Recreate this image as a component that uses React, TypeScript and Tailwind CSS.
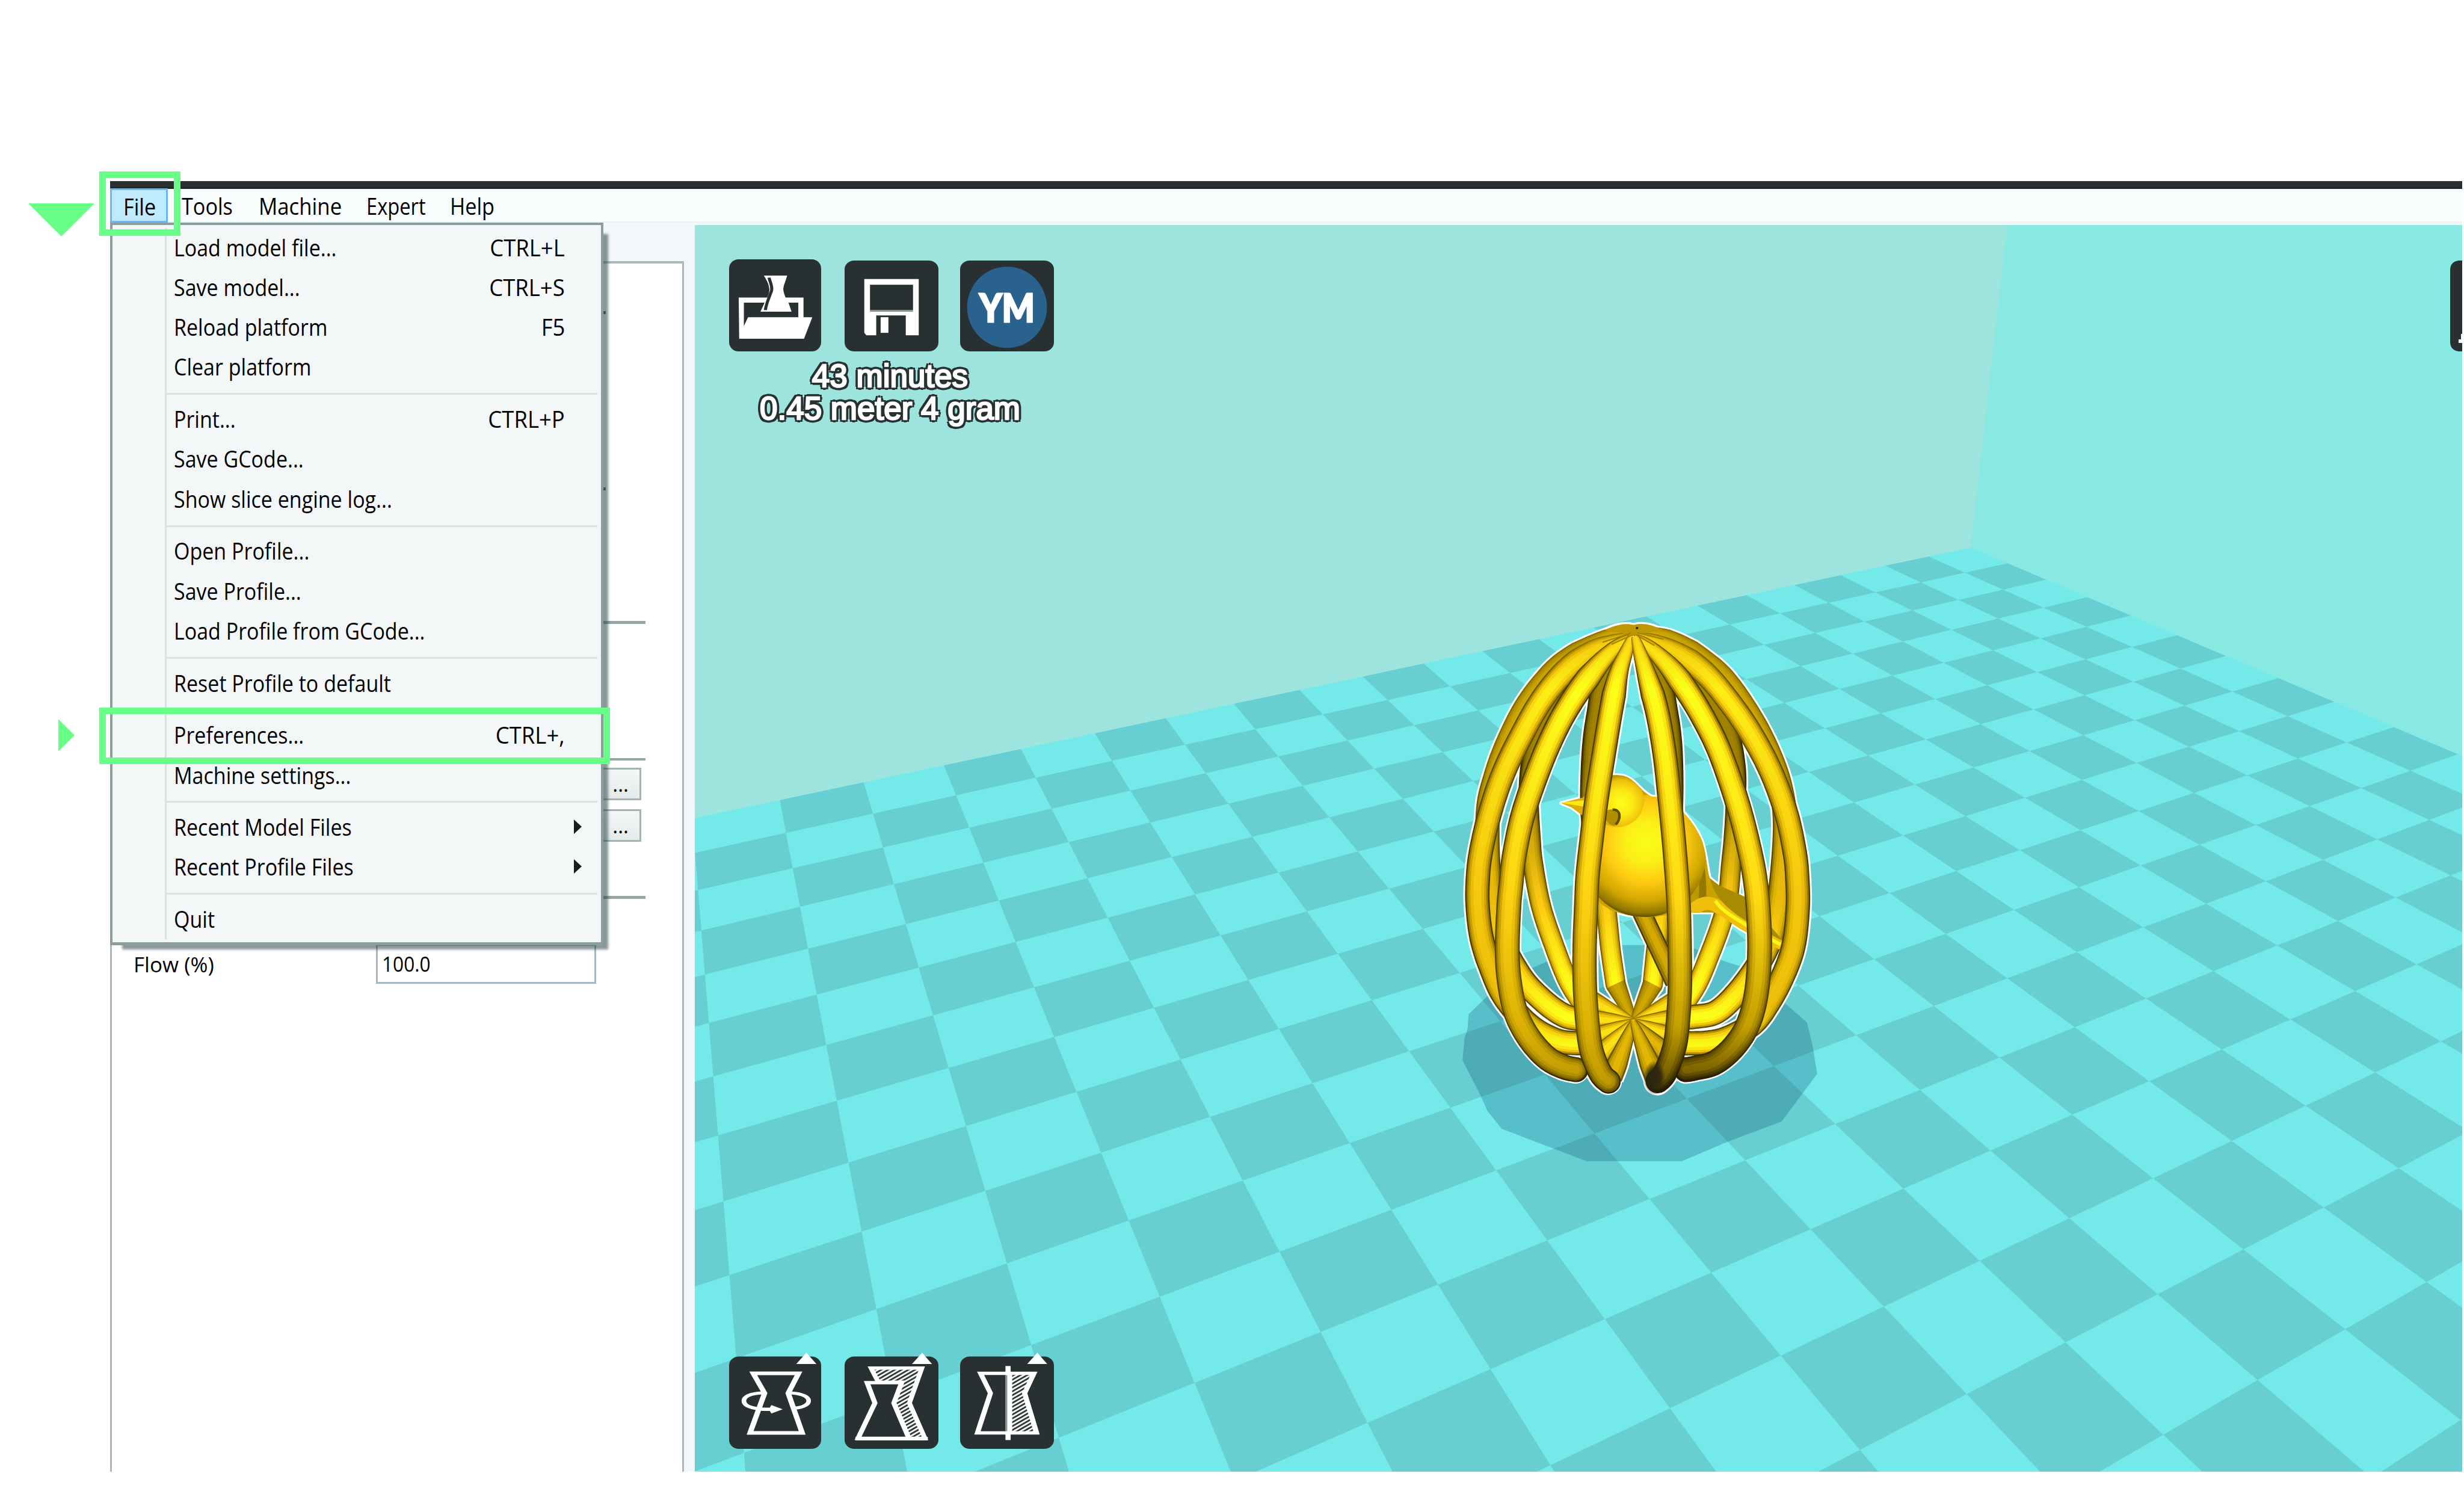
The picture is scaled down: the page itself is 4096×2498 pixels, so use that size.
import React from "react";

type Entry = { label: string; keys?: string; sub?: boolean } | null;

const FILE_MENU: Entry[] = [
  { label: "Load model file...", keys: "CTRL+L" },
  { label: "Save model...", keys: "CTRL+S" },
  { label: "Reload platform", keys: "F5" },
  { label: "Clear platform" },
  null,
  { label: "Print...", keys: "CTRL+P" },
  { label: "Save GCode..." },
  { label: "Show slice engine log..." },
  null,
  { label: "Open Profile..." },
  { label: "Save Profile..." },
  { label: "Load Profile from GCode..." },
  null,
  { label: "Reset Profile to default" },
  null,
  { label: "Preferences...", keys: "CTRL+," },
  { label: "Machine settings..." },
  null,
  { label: "Recent Model Files", sub: true },
  { label: "Recent Profile Files", sub: true },
  null,
  { label: "Quit" },
];

/* ---------- build platform ---------- */

// Perspective projection of platform grid vertex (u, v) into scene units.
function project(u: number, v: number): [number, number] {
  const w = 1 - 0.01524 * u - 0.02655 * v;
  return [
    (3874 - 140.41 * u - 32.55 * v) / w,
    (1076.1 + 0.845 * u + 1.24 * v) / w,
  ];
}

function quad(u0: number, v0: number, u1: number, v1: number) {
  return (
    "M" +
    [project(u0, v0), project(u1, v0), project(u1, v1), project(u0, v1)]
      .map(([x, y]) => x.toFixed(1) + " " + y.toFixed(1))
      .join("L") +
    "Z"
  );
}

const DARK_TILES = (() => {
  let d = "";
  for (let u = 0; u < 24; u++)
    for (let v = 0; v < 20; v++) if ((u + v) % 2 === 1) d += quad(u, v, u + 1, v + 1);
  return d;
})();

/* ---------- egg cage ---------- */

type Pt = [number, number];

// Points along a Catmull-Rom spline.
function sample(p: Pt[]): Pt[] {
  const out: Pt[] = [];
  const n = 10;
  for (let i = 0; i < p.length - 1; i++) {
    const a = p[Math.max(0, i - 1)], b = p[i], c = p[i + 1], e = p[Math.min(p.length - 1, i + 2)];
    for (let k = 0; k < n; k++) {
      const t = k / n, t2 = t * t, t3 = t2 * t;
      const f = (q: 0 | 1) =>
        0.5 * (2 * b[q] + (c[q] - a[q]) * t + (2 * a[q] - 5 * b[q] + 4 * c[q] - e[q]) * t2 + (3 * b[q] - a[q] - 3 * c[q] + e[q]) * t3);
      out.push([f(0), f(1)]);
    }
  }
  out.push(p[p.length - 1]);
  return out;
}

// Outline of a bar that starts narrow at its first point and widens over `reach`.
function ribbon(pts: Pt[], half: number, pad = 0, reach = 120, start = 0.3, cap = true) {
  const s = sample(pts);
  const left: string[] = [], right: string[] = [];
  let dist = 0;
  for (let i = 0; i < s.length; i++) {
    const a = s[Math.max(0, i - 1)], b = s[Math.min(s.length - 1, i + 1)];
    if (i) dist += Math.hypot(s[i][0] - s[i - 1][0], s[i][1] - s[i - 1][1]);
    const dx = b[0] - a[0], dy = b[1] - a[1], l = Math.hypot(dx, dy) || 1;
    const h = half * Math.min(1, start + (1 - start) * Math.pow(dist / reach, 0.75)) + pad;
    left.push((s[i][0] - (dy / l) * h).toFixed(1) + " " + (s[i][1] + (dx / l) * h).toFixed(1));
    right.unshift((s[i][0] + (dy / l) * h).toFixed(1) + " " + (s[i][1] - (dx / l) * h).toFixed(1));
  }
  const r = (half + pad).toFixed(1);
  return `M${left.join("L")}${cap ? `A${r} ${r} 0 0 0 ` : "L"}${right.join("L")}Z`;
}

const BACK: Pt[][] = [
  [[3208,1254],[3155,1330],[3139,1400],[3129,1480],[3127,1600],[3143,1700],[3157,1783],[3166,1866],[3176,1934]],
  [[3214,1254],[3262,1330],[3279,1400],[3288,1480],[3288,1600],[3275,1720],[3264,1800],[3256,1866],[3249,1934]],
  [[3205,1254],[3115,1330],[3045,1410],[3014,1480],[3005,1560],[3009,1650],[3014,1700],[3030,1783],[3058,1866],[3083,1928],[3112,1975]],
  [[3215,1254],[3325,1330],[3390,1420],[3411,1500],[3412,1580],[3408,1650],[3403,1700],[3397,1762],[3383,1816],[3360,1878],[3337,1932],[3310,1975]],
];
const L4: Pt[] = [[3211,1241],[3175,1247],[3141,1262],[3077,1301],[3040,1336],[3000,1389],[2965,1458],[2940,1526],[2925,1597],[2927,1720],[2945,1830],[2987,1915],[3032,1965],[3076,1996],[3110,2002]];
const R4: Pt[] = [[3211,1241],[3256,1248],[3290,1261],[3345,1297],[3391,1338],[3441,1410],[3477,1480],[3500,1547],[3509,1620],[3502,1730],[3488,1820],[3465,1880],[3420,1945],[3375,1988],[3331,1998],[3310,1999]];
const L3: Pt[] = [[3208,1250],[3170,1261],[3130,1278],[3078,1318],[3031,1375],[2990,1447],[2955,1520],[2929,1597],[2911,1675],[2905,1730],[2905,1783],[2913,1845],[2931,1902],[2958,1960],[3007,2015],[3062,2045],[3110,2050]];
const R3: Pt[] = [[3214,1250],[3254,1261],[3302,1285],[3352,1323],[3397,1376],[3440,1438],[3481,1515],[3511,1597],[3528,1675],[3533,1725],[3534,1783],[3526,1857],[3506,1915],[3477,1970],[3445,2012],[3395,2040],[3354,2049],[3310,2050]];
const L2: Pt[] = [[3209,1252],[3180,1269],[3150,1298],[3115,1341],[3087,1382],[3060,1430],[3029,1500],[2995,1597],[2977,1680],[2970,1740],[2966,1783],[2963,1866],[2967,1928],[2980,1990],[3006,2040],[3040,2078],[3073,2096],[3098,2102]];
const R2: Pt[] = [[3213,1252],[3243,1272],[3282,1311],[3318,1360],[3348,1410],[3376,1466],[3400,1530],[3421,1597],[3438,1665],[3449,1720],[3456,1783],[3459,1866],[3453,1949],[3437,2011],[3409,2056],[3371,2088],[3331,2099],[3314,2102]];
const F1: Pt[] = [[3208,1250],[3197,1280],[3181,1325],[3167,1395],[3153,1479],[3139,1567],[3129,1647],[3121,1720],[3118,1783],[3115,1866],[3116,1949],[3123,2032],[3131,2073],[3147,2110],[3162,2125]];
const F2: Pt[] = [[3214,1250],[3223,1280],[3237,1325],[3257,1395],[3272,1479],[3282,1567],[3290,1647],[3296,1720],[3300,1783],[3302,1866],[3302,1949],[3296,2032],[3287,2073],[3272,2110],[3258,2125]];

const HUB: Pt = [3211, 2008];
const SPOKES: Pt[] = [
  [3176,1934],[3249,1934],[3130,1968],[3293,1968],[3100,2001],[3324,1999],[3100,2050],[3322,2050],[3125,2092],[3297,2092],[3168,2118],[3254,2118],
];

const TONES: Record<string, string[][]> = {
  // near bars: bright at the shoulder, darkening underneath
  f: [
    ["#7d6500", "#4a3b00", "#5a4700", "#4a3a00", "#1c1500"],
    ["#c39c00", "#a68600", "#a88700", "#7a6200", "#241b00"],
    ["#e6ba08", "#e9bf08", "#d3a902", "#9a7d00", "#302500"],
    ["#f4cc10", "#fbea16", "#f4ca10", "#b18f00", "#453600"],
    ["#f7d410", "#fbff18", "#ffdb12", "#c3a000", "#5a4700"],
  ],
  // left near bars keep some light at the bottom
  m: [
    ["#7d6500", "#4a3b00", "#5a4700", "#5a4700", "#2a2100"],
    ["#c39c00", "#a68600", "#a88700", "#957800", "#6b5600"],
    ["#e6ba08", "#e9bf08", "#d0a702", "#b89400", "#8a6f00"],
    ["#f4cc10", "#fbea16", "#f1c60e", "#cfa702", "#a88800"],
    ["#f7d410", "#fbff18", "#fdd412", "#dcb104", "#b99600"],
  ],
  // outer bars, more orange
  s: [
    ["#8f7400", "#6b5600", "#4a3b00", "#574500", "#5f4c00"],
    ["#b89400", "#b08e00", "#997a00", "#a88700", "#b89400"],
    ["#d6ac04", "#e3b806", "#c99f00", "#d0a700", "#f1c60e"],
    ["#e8bb0a", "#fbd812", "#e8ba08", "#e8ba06", "#fbe414"],
    ["#f1c60e", "#fdee14", "#f4c60e", "#eebf0a", "#fbf916"],
  ],
  // rear outer bars
  o: [
    ["#8a7000", "#7d6500", "#4a3b00", "#574500", "#5f4c00"],
    ["#a88800", "#a88800", "#957800", "#b08e00", "#c9a200"],
    ["#b99600", "#bc9900", "#c39c00", "#dcb204", "#f1c60e"],
    ["#c9a200", "#cda500", "#e0b406", "#f7ca10", "#fbee14"],
    ["#cfa700", "#d6ac04", "#ecbc0a", "#ffdb12", "#fbff18"],
  ],
  // far bars, dark near the top and lit from inside below
  b: [
    ["#3a2e00", "#2e2500", "#6b5600", "#7d6500", "#7d6500"],
    ["#6b5600", "#544400", "#b08e00", "#cda500", "#cda500"],
    ["#8a7000", "#7d6500", "#d6ac04", "#f1c60e", "#f1c60e"],
    ["#9a7d00", "#947800", "#eabb0a", "#fdf016", "#fdf016"],
    ["#a38500", "#a08200", "#ffca12", "#fbff18", "#fbff18"],
  ],
};
const TONE_STOPS: Record<string, number[]> = {
  f: [0.02, 0.14, 0.58, 0.86, 1],
  m: [0.02, 0.14, 0.58, 0.86, 1],
  s: [0.02, 0.14, 0.6, 0.82, 0.9],
  o: [0, 0.3, 0.6, 0.74, 0.84],
  b: [0, 0.3, 0.6, 0.78, 1],
};
const LAYERS = [1, 0.88, 0.74, 0.56, 0.32];

function Tube({ pts, w, tone }: { pts: Pt[]; w: number; tone: string }) {
  return (
    <g>
      {LAYERS.map((k, i) => (
        <path key={i} d={ribbon(pts, (w / 2) * k)} fill={`url(#${tone}${i})`} />
      ))}
    </g>
  );
}

const BIRD =
  "M3112 1567L3135 1540C3150 1524 3170 1521 3190 1524C3215 1530 3225 1555 3247 1565L3268 1567C3300 1580 3330 1615 3345 1650C3356 1680 3356 1715 3362 1726L3380 1740L3430 1762L3492 1833L3506 1849L3498 1866L3435 1833C3400 1815 3385 1795 3365 1793L3320 1793L3275 1798C3240 1806 3205 1802 3170 1790C3130 1770 3108 1740 3112 1690L3110 1602L3090 1587L3069 1578Z";

function Scene() {
  const near = [L4, R4, L3, R3, L2, R2, F1, F2];
  return (
    <svg
      className="absolute inset-0 h-full w-full"
      viewBox="1366 442 3474 2450"
      preserveAspectRatio="none"
    >
      <defs>
        {Object.keys(TONES).map((t) =>
          TONES[t].map((stops, i) => (
            <linearGradient key={t + i} id={t + i} gradientUnits="userSpaceOnUse" x1="0" y1="1225" x2="0" y2="2145">
              {stops.map((c, j) => (
                <stop key={j} offset={TONE_STOPS[t][j]} stopColor={c} />
              ))}
            </linearGradient>
          ))
        )}
        <radialGradient id="body" gradientUnits="userSpaceOnUse" cx="3236" cy="1655" r="152">
          <stop offset="0" stopColor="#fbff18" />
          <stop offset="0.28" stopColor="#fbee16" />
          <stop offset="0.52" stopColor="#ffc912" />
          <stop offset="0.76" stopColor="#cfa600" />
          <stop offset="0.92" stopColor="#8f7400" />
          <stop offset="1" stopColor="#3a2e00" />
        </radialGradient>
        <radialGradient id="head" gradientUnits="userSpaceOnUse" cx="3186" cy="1578" r="56">
          <stop offset="0" stopColor="#fbff18" />
          <stop offset="0.45" stopColor="#fbe814" />
          <stop offset="0.8" stopColor="#efc00c" />
          <stop offset="1" stopColor="#b08e00" />
        </radialGradient>
        <radialGradient id="tip">
          <stop offset="0" stopColor="#2a2412" />
          <stop offset="0.6" stopColor="#2a2412" stopOpacity="0.8" />
          <stop offset="1" stopColor="#2a2412" stopOpacity="0" />
        </radialGradient>
        <clipPath id="birdClip"><path d={BIRD} /></clipPath>
      </defs>

      <rect x="1366" y="442" width="3474" height="2450" fill="#9de4df" />
      <path d="M3946 442L4840 442V1487L3874 1076Z" fill="#88e9e3" />
      <path d={quad(0, 0, 24, 20)} fill="#73e9ea" />
      <path d={DARK_TILES} fill="#67cfd2" />
      <path
        d="M2922 1959L2887 1993L2885 2021L2879 2040L2875 2083L2911 2154L2924 2183L2952 2218L3119 2282H3306L3397 2243L3502 2204L3572 2110L3563 2054L3552 2009L3512 1974L3429 1901L3388 1888L3331 1864L3233 1857H3124L3044 1888L3010 1903Z"
        fill="#0e5274"
        fillOpacity="0.28"
      />

      {/* white silhouette behind the model */}
      <g fill="#fff">
        {BACK.map((p, i) => <path key={i} d={ribbon(p, 20, 3.5)} />)}
        {near.map((p, i) => <path key={i} d={ribbon(p, 24, 3.5)} />)}
        {SPOKES.map((p, i) => <path key={i} d={ribbon([HUB, p], 21, 3.5, 90, 0.3, false)} />)}
        <path d="M3226 1790L3292 1930" stroke="#fff" strokeWidth="45" />
        <path d="M3150 1236C3175 1221 3200 1221 3211 1224C3225 1220 3250 1221 3275 1238Z" />
        <path d={BIRD} stroke="#fff" strokeWidth="7" strokeLinejoin="round" />
      </g>

      {BACK.map((p, i) => <Tube key={i} pts={p} w={40} tone="b" />)}

      {/* spokes meeting at the base */}
      {SPOKES.map((p, i) => {
        const c = i < 2
          ? ["#7d6500", "#a68600", "#bd9800", "#cfa700"]
          : i === 10 || i === 11 || i === 9
          ? ["#6b5600", "#b08e00", "#cfa700", "#e3b606"]
          : ["#8a7000", "#cfa700", "#f1c60e", "#fbe014"];
        return (
          <g key={i}>
            {[21, 17.5, 13, 7].map((h, j) => (
              <path key={j} d={ribbon([HUB, p], h, 0, 90, 0.3, false)} fill={c[j]} />
            ))}
          </g>
        );
      })}

      <Tube pts={L4} w={48} tone="o" />
      <Tube pts={R4} w={48} tone="o" />

      {/* perch */}
      <path d="M3226 1790L3292 1930" stroke="#4a3b00" strokeWidth="38" />
      <path d="M3226 1790L3292 1930" stroke="#957800" strokeWidth="32" />
      <path d="M3227 1790L3293 1930" stroke="#bd9800" strokeWidth="23" />
      <path d="M3227 1790L3293 1930" stroke="#d3a902" strokeWidth="12" />

      {/* bird */}
      <g clipPath="url(#birdClip)">
        <path d={BIRD} fill="#c9a200" />
        <path d="M3320 1660L3372 1800L3300 1810Z" fill="#bd9800" />
        <path d="M3340 1680C3350 1740 3352 1780 3330 1795" stroke="#957800" strokeWidth="14" fill="none" />
        <path d="M3320 1795C3345 1770 3365 1765 3400 1800L3500 1862" stroke="#efbf0c" strokeWidth="26" fill="none" />
        <path d="M3362 1726C3368 1755 3385 1780 3436 1812L3506 1850L3430 1762L3380 1740Z" fill="#a88b00" />
        <path d="M3372 1770C3385 1790 3405 1800 3436 1820L3500 1856" stroke="#fbf516" strokeWidth="7" fill="none" />
        <ellipse cx="3232" cy="1682" rx="121" ry="120" fill="url(#body)" />
        <ellipse cx="3180" cy="1573" rx="52" ry="52" fill="url(#head)" />
        <path d="M3060 1577L3120 1560V1606Z" fill="#d9ae06" />
        <path d="M3066 1577L3120 1572V1586Z" fill="#fbe814" />
        <path d="M3160 1592C3180 1585 3188 1605 3176 1622C3166 1624 3158 1616 3156 1608Z" fill="#b08e00" />
        <path d="M3170 1591C3188 1590 3186 1612 3176 1620" stroke="#5f4c00" strokeWidth="5" fill="none" />
      </g>

      <Tube pts={L3} w={48} tone="s" />
      <Tube pts={R3} w={48} tone="s" />
      <Tube pts={L2} w={49} tone="m" />
      <Tube pts={R2} w={49} tone="f" />
      <Tube pts={F1} w={48} tone="m" />
      <Tube pts={F2} w={48} tone="f" />
      <ellipse cx="3252" cy="2118" rx="22" ry="34" fill="url(#tip)" />

      {/* crown where the bars meet */}
      <path d="M3155 1238C3180 1225 3200 1225 3211 1228C3225 1224 3245 1225 3268 1238L3211 1248Z" fill="#bd9800" />
      <path d="M3150 1262L3206 1244M3168 1266L3208 1248M3270 1256L3218 1243M3252 1268L3216 1247" stroke="#a08200" strokeWidth="2.5" />
      <circle cx="3218" cy="1234" r="2.5" fill="#2e2500" />
    </svg>
  );
}

/* ---------- tool buttons ---------- */

function ToolButton({ box, className, children }: { box: string; className: string; children: React.ReactNode }) {
  return (
    <svg viewBox={box} preserveAspectRatio="none" className={"block shrink-0 overflow-visible " + className}>
      {children}
    </svg>
  );
}

function LoadIcon() {
  return (
    <ToolButton box="143 207 355 542" className="h-[153px] w-[153px]">
      <rect x="143" y="207" width="355" height="542" rx="36" ry="55" fill="#283031" />
      <path d="M180 432H430V548H464L432 675H182ZM200 462V600L216 548H410V462Z" fill="#fff" fillRule="evenodd" />
      <path d="M277 303H367C360 340 352 365 352 385C354 410 362 440 372 462L384 515H264L280 462C292 430 300 400 298 380C296 350 286 325 277 303Z" fill="#fff" />
      <path d="M297 315C302 345 310 365 307 390C300 425 286 465 283 506" stroke="#283031" strokeWidth="12" fill="none" />
    </ToolButton>
  );
}

function SaveIcon() {
  return (
    <ToolButton box="588 215 362 534" className="h-[151px] w-[156px]">
      <rect x="588" y="215" width="362" height="534" rx="38" ry="52" fill="#283031" />
      <path d="M664 324H874V654H824V538H710V654H672L664 640ZM686 357V507H852V357Z" fill="#fff" fillRule="evenodd" />
      <rect x="686" y="507" width="166" height="9" fill="#869393" />
      <rect x="727" y="548" width="30" height="92" fill="#fff" />
    </ToolButton>
  );
}

function YmIcon() {
  return (
    <ToolButton box="1033 215 362 534" className="h-[151px] w-[156px]">
      <rect x="1033" y="215" width="362" height="534" rx="38" ry="52" fill="#283031" />
      <ellipse cx="1214" cy="490" rx="154" ry="239" fill="#2a628e" />
      <g transform="translate(1108 576) scale(1 1.531)">
        <text x="0" y="0" textLength="212" lengthAdjust="spacingAndGlyphs" fontFamily="Lato" fontWeight="900" fontSize="148" fill="#fff" stroke="#fff" strokeWidth="7">YM</text>
      </g>
    </ToolButton>
  );
}

const HATCH = (
  <pattern id="hatch" width="26" height="26" patternUnits="userSpaceOnUse" patternTransform="skewX(-8)">
    <rect width="26" height="26" fill="#fff" />
    <path d="M-4 30L30 -4M-17 17L17 -17M9 43L43 9" stroke="#283031" strokeWidth="9" />
  </pattern>
);

function RotateIcon() {
  return (
    <ToolButton box="143 192 355 546" className="h-[154px] w-[153px]">
      <rect x="143" y="194" width="355" height="544" rx="38" ry="52" fill="#283031" />
      <path d="M236 293H411L371 410L425 644H224L280 410Z" fill="none" stroke="#fff" strokeWidth="21" />
      <path d="M272 408C225 410 200 430 200 455C200 480 222 503 290 506M380 408C430 412 450 435 450 455C450 475 430 495 396 498" fill="none" stroke="#fff" strokeWidth="18" />
      <path d="M268 495H300L306 480L350 505L306 530L300 515H268Z" fill="#fff" />
      <path d="M441 172L480 238H402Z" fill="#fff" />
    </ToolButton>
  );
}

function ScaleIcon() {
  return (
    <ToolButton box="588 192 362 546" className="h-[154px] w-[156px]">
      <defs>{HATCH}</defs>
      <rect x="588" y="194" width="362" height="544" rx="38" ry="52" fill="#283031" />
      <path d="M690 262H886L838 468L898 676H836L778 468L808 345H718Z" fill="url(#hatch)" stroke="#fff" strokeWidth="19" />
      <path d="M675 348H808L778 468L836 676H640L705 468Z" fill="#283031" stroke="#fff" strokeWidth="20" />
      <rect x="630" y="668" width="279" height="20" fill="#fff" />
      <path d="M887 172L925 238H848Z" fill="#fff" />
    </ToolButton>
  );
}

function MirrorIcon() {
  return (
    <ToolButton box="1033 192 362 546" className="h-[154px] w-[156px]">
      <rect x="1033" y="194" width="362" height="544" rx="38" ry="52" fill="#283031" />
      <path d="M1225 293H1318L1282 410L1328 644H1225Z" fill="url(#hatch)" stroke="#fff" strokeWidth="18" />
      <path d="M1112 293H1318L1282 410L1328 644H1100L1150 410Z" fill="none" stroke="#fff" strokeWidth="20" />
      <rect x="1208" y="250" width="20" height="436" fill="#fff" />
      <rect x="1207" y="304" width="8" height="330" fill="#869393" />
      <path d="M1331 172L1369 238H1292Z" fill="#fff" />
    </ToolButton>
  );
}

/* ---------- chrome ---------- */

const uiText = "whitespace-nowrap font-['Open_Sans',sans-serif] text-[38px] leading-none text-black";

function FileDropdown() {
  return (
    <div className="absolute left-0 top-[69px] z-10 flex h-[1201px] w-[820px] flex-col border-x-[4px] border-b-[5px] border-t-[4px] border-[#8a9e9e] bg-[#f3f7f8] py-[4px] shadow-[14px_13px_4px_-6px_rgba(40,66,66,0.55)]">
      <div className="absolute left-[87px] top-[5px] h-[1182px] w-[3px] bg-[#d9e1e1]" />
      {FILE_MENU.map((e, i) =>
        e === null ? (
          <div key={i} className="ml-[89px] mr-[6px] flex h-[20.7px] items-center">
            <div className="relative top-[2px] h-[3px] w-full bg-[#d9e1e1]" />
          </div>
        ) : (
          <div key={i} className="flex h-[66.15px] items-center justify-between pl-[102px] pr-[60px]">
            <span className={uiText + " origin-left scale-x-[0.895]"}>{e.label}</span>
            {e.keys && <span className={uiText + " origin-right scale-x-[0.96]"}>{e.keys}</span>}
            {e.sub && (
              <svg className="-mr-[28px] h-[24px] w-[13px]" viewBox="0 0 13 24">
                <path d="M0 0L13 12L0 24Z" fill="#141f1f" />
              </svg>
            )}
          </div>
        )
      )}
    </div>
  );
}

function MenuBar() {
  const item = uiText + " inline-block origin-left scale-x-[0.9] pt-[3px]";
  return (
    <nav className="relative flex h-[56px] items-center border-b-[2px] border-[#edf1f1] bg-[#f8fcfd]">
      <div className="flex h-[57px] w-[96px] items-center border-[3px] border-[#68b6ff] bg-[#c0ebff] pl-[19px]">
        <span className={item}>File</span>
      </div>
      <div className="w-[143px] pl-[23px]"><span className={item}>Tools</span></div>
      <div className="w-[180px] pl-[8px]"><span className={uiText + " inline-block origin-left scale-x-[0.915] pt-[3px]"}>Machine</span></div>
      <div className="w-[138px] pl-[7px]"><span className={uiText + " inline-block origin-left scale-x-[0.86] pt-[3px]"}>Expert</span></div>
      <div className="w-[100px] pl-[8px]"><span className={item}>Help</span></div>
    </nav>
  );
}

function EllipsisButton({ className }: { className: string }) {
  return (
    <div className={"mr-[68px] flex h-[54px] w-[90px] items-center justify-end border-[3px] border-[#a4b4b4] bg-linear-to-b from-[#f4f7f7] to-[#e4eaea] pr-[18px] " + className}>
      <span className="font-['Open_Sans',sans-serif] text-[34px] leading-none text-black">...</span>
    </div>
  );
}

function SettingsPanel() {
  return (
    <aside className="w-[972px] shrink-0 bg-[#f3f7f9] pt-[64px]">
      <div className="flex h-full w-[954px] flex-col items-end border-x-[3px] border-t-[4px] border-[#a9b8b8] bg-white">
        <div className="mr-[127px] mt-[79px] h-[5px] w-[20px] bg-[#5c6d6d]" />
        <div className="mr-[127px] mt-[288px] h-[5px] w-[20px] bg-[#5c6d6d]" />
        <div className="mr-[61px] mt-[217px] h-[5px] w-[820px] bg-[#94a6a6]" />
        <div className="mr-[61px] mt-[223px] h-[4px] w-[820px] bg-[#94a6a6]" />
        <EllipsisButton className="mt-[12px]" />
        <EllipsisButton className="mt-[15px]" />
        <div className="mr-[61px] mt-[90px] h-[5px] w-[820px] bg-[#94a6a6]" />
        <div className="mr-[143px] mt-[75px] flex items-center">
          <span className="mr-[270px] inline-block w-[133px] whitespace-nowrap font-['Open_Sans',sans-serif] text-[35px] leading-none text-black">
            Flow (%)
          </span>
          <div className="flex h-[66px] w-[366px] shrink-0 items-center border-[3px] border-[#a7b7c2] bg-white pl-[7px]">
            <span className="origin-left scale-x-[0.93] font-['Open_Sans',sans-serif] text-[34px] leading-none text-black">100.0</span>
          </div>
        </div>
      </div>
    </aside>
  );
}

const statText =
  "whitespace-nowrap text-center font-['Liberation_Sans',sans-serif] text-[53px] leading-[54px] text-white [-webkit-text-stroke:2.5px_white] [text-shadow:5px_0_0_#283031,-5px_0_0_#283031,0_5px_0_#283031,0_-5px_0_#283031,4px_4px_0_#283031,-4px_4px_0_#283031,4px_-4px_0_#283031,-4px_-4px_0_#283031]";

function Viewport() {
  return (
    <section className="relative mt-[4px] flex-1 overflow-hidden">
      <Scene />
      <div className="relative flex h-full flex-col justify-between pb-[38px] pl-[57px] pt-[57px]">
        <div className="flex items-start justify-between">
          <div>
            <div className="flex items-end">
              <LoadIcon />
              <div className="w-[39px]" />
              <SaveIcon />
              <div className="w-[36px]" />
              <YmIcon />
            </div>
            <div className="mt-[14px] flex w-[535px] flex-col items-center">
              <div className={statText}>43 minutes</div>
              <div className={statText}>0.45 meter 4 gram</div>
            </div>
          </div>
          <div className="mt-[2px] h-[151px] w-[20px] overflow-hidden">
            <svg className="block h-[151px] w-[20px]" viewBox="0 0 20 151">
              <path d="M20 0H14Q0 2 0 16V135Q0 149 14 151H20Z" fill="#283031" />
              <path d="M20 122V137H14V131H18V122Z" fill="#fff" />
            </svg>
          </div>
        </div>
        <div className="flex">
          <RotateIcon />
          <div className="w-[39px]" />
          <ScaleIcon />
          <div className="w-[36px]" />
          <MirrorIcon />
        </div>
      </div>
    </section>
  );
}

export default function App() {
  return (
    <div className="relative h-[2498px] w-[4096px] overflow-hidden bg-white pl-[183px] pr-[3px] pt-[301px]">
      <div className="flex h-[2145px] flex-col">
        <div className="h-[13px] shrink-0 border-b-[3px] border-[#1e2728] bg-[#283031]" />
        <div className="relative flex min-h-0 flex-1 flex-col">
          <MenuBar />
          <div className="flex min-h-0 flex-1 bg-[#f3f7f9]">
            <SettingsPanel />
            <Viewport />
          </div>
          <div className="absolute left-0 top-[-13px] h-0 w-0">
            <FileDropdown />
          </div>
        </div>
      </div>

      {/* callouts over the window */}
      <div className="absolute left-[165px] top-[285px] z-20 h-[107px] w-[135px] border-[11px] border-[#68ff86]" />
      <div className="absolute left-[165px] top-[1176px] z-20 h-[94px] w-[849px] border-[11px] border-[#68ff86]" />
      <svg className="absolute left-[47px] top-[338px] h-[55px] w-[110px]" viewBox="0 0 110 55">
        <path d="M0 0H110L55 55Z" fill="#68ff86" />
      </svg>
      <svg className="absolute left-[97px] top-[1195px] h-[54px] w-[27px]" viewBox="0 0 27 54">
        <path d="M0 0L27 27L0 54Z" fill="#68ff86" />
      </svg>
    </div>
  );
}
